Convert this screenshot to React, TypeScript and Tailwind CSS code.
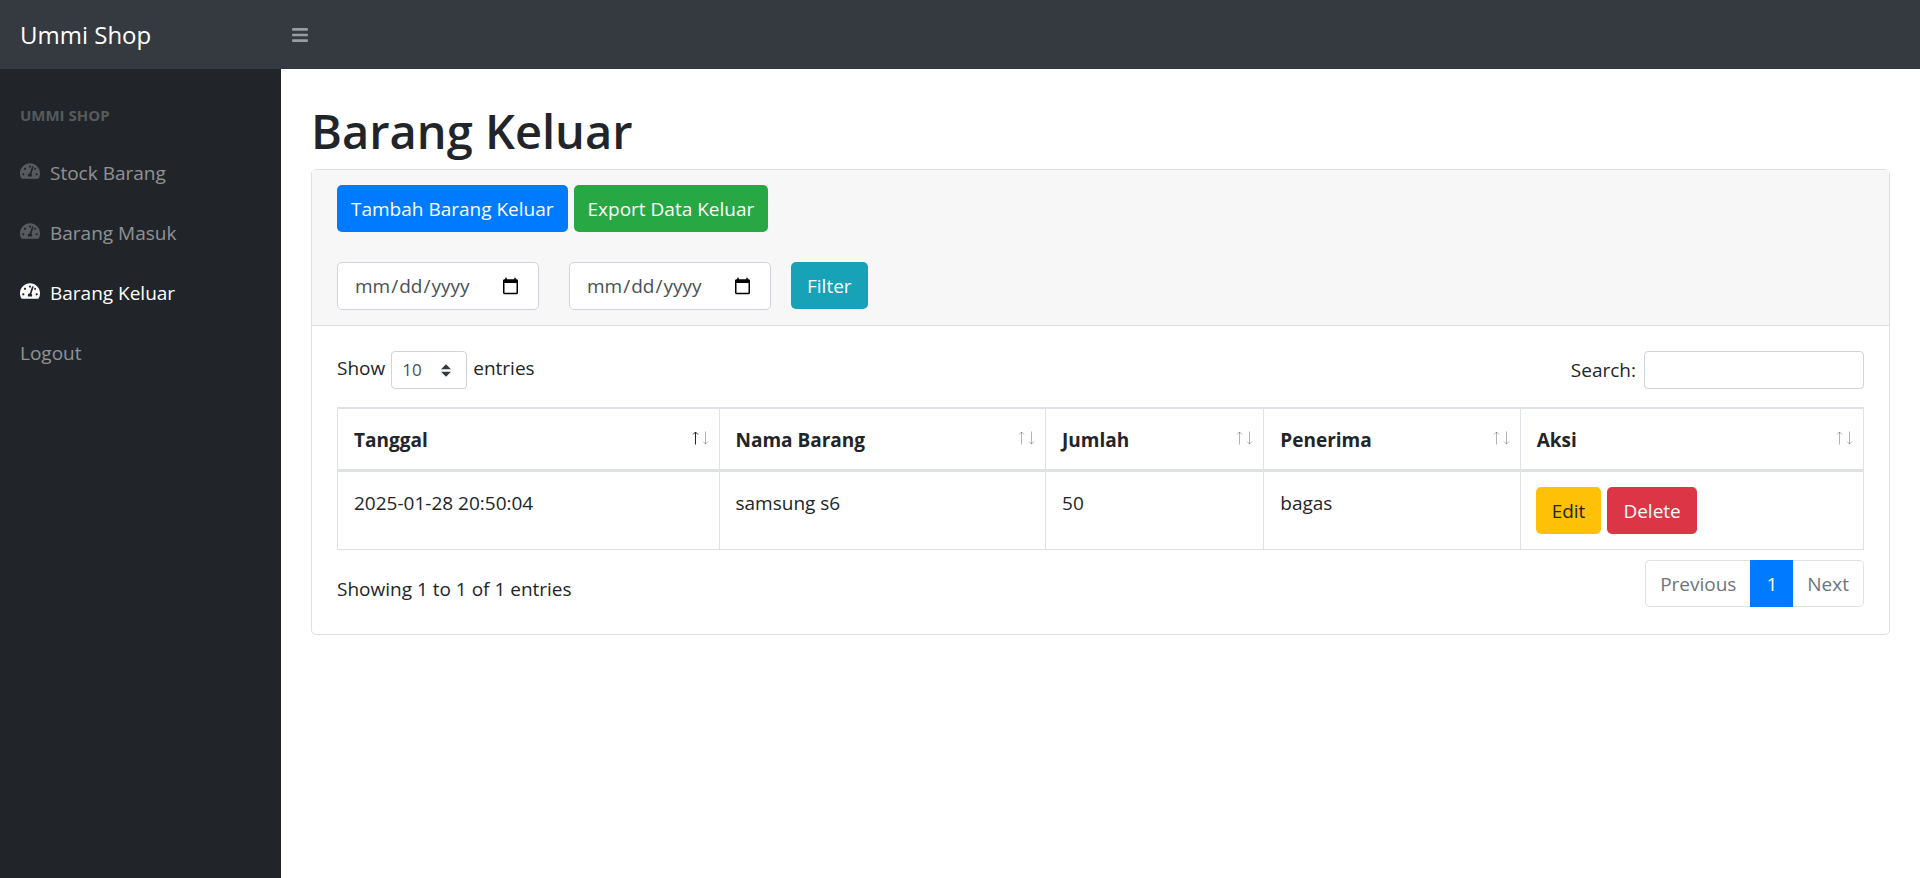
import type { ReactNode } from "react";
import { FaBars, FaTachometerAlt } from "react-icons/fa";

const navItems = [
  { label: "Stock Barang", icon: true, active: false },
  { label: "Barang Masuk", icon: true, active: false },
  { label: "Barang Keluar", icon: true, active: true },
  { label: "Logout", icon: false, active: false },
];

const columns = [
  { label: "Tanggal", width: "w-[25%]", sorted: true },
  { label: "Nama Barang", width: "w-[21.4%]", sorted: false },
  { label: "Jumlah", width: "w-[14.3%]", sorted: false },
  { label: "Penerima", width: "w-[16.8%]", sorted: false },
  { label: "Aksi", width: "w-[22.5%]", sorted: false },
];

const rows = [
  { tanggal: "2025-01-28 20:50:04", nama: "samsung s6", jumlah: 50, penerima: "bagas" },
];

function Button({ color, children }: { color: string; children: ReactNode }) {
  return (
    <button type="button" className={`h-[47px] rounded-[5px] ${color}`}>
      {children}
    </button>
  );
}

function DateInput({ label }: { label: string }) {
  return (
    <input
      type="date"
      aria-label={label}
      className="h-12 w-[202px] rounded-[5px] border border-[#ced4da] bg-white px-4 text-[#495057]"
    />
  );
}

function SortArrows({ sorted }: { sorted: boolean }) {
  return (
    <svg width="18" height="14" viewBox="0 0 18 14" fill="none" stroke="#212529" aria-hidden="true">
      <path d="M4.500 13.500V1M2 3.500L4.500 1L7 3.500" strokeWidth="1" opacity={sorted ? 1 : 0.35} />
      <path d="M14.500 0.500V13M12 10.500L14.500 13L17 10.500" strokeWidth="1" opacity="0.35" />
    </svg>
  );
}

function Sidebar() {
  return (
    <nav className="w-[281px] shrink-0 bg-[#212529] pt-[34px]">
      <div className="px-5 pb-4 text-[15px] leading-6 font-bold text-white/25">UMMI SHOP</div>
      {navItems.map((item) => (
        <a
          key={item.label}
          href="#"
          className={`flex h-[60px] items-center px-5 ${item.active ? "text-white" : "text-white/50"}`}
        >
          {item.icon && (
            <FaTachometerAlt
              className={`mr-2.5 mb-1 h-[18px] w-5 ${item.active ? "text-white" : "text-white/25"}`}
            />
          )}
          {item.label}
        </a>
      ))}
    </nav>
  );
}

export default function App() {
  return (
    <div className="flex min-h-screen flex-col bg-white font-['Open_Sans',sans-serif] text-[19px] leading-[30px] text-[#212529]">
      <header className="flex h-[69px] items-center bg-[#343a40]">
        <a href="#" className="w-[281px] px-5 text-2xl text-white">
          Ummi Shop
        </a>
        <button type="button" aria-label="Toggle navigation" className="px-[11px] text-white/50">
          <FaBars className="h-[18px] w-4" />
        </button>
      </header>
      <div className="flex grow">
        <Sidebar />
        <main className="grow px-[30px] pt-8">
          <h1 className="mb-2 text-[47px] leading-[60px] font-semibold">Barang Keluar</h1>
          <section className="rounded-[5px] border border-[#dfdfdf]">
            <div className="border-b border-[#dfdfdf] bg-[#f7f7f7] px-[25px] py-[15px]">
              <div className="flex gap-1.5">
                <Button color="bg-[#007bff] px-3.5 text-white">Tambah Barang Keluar</Button>
                <Button color="bg-[#28a745] px-3.5 text-white">Export Data Keluar</Button>
              </div>
              <form className="mt-[30px] flex items-start">
                <DateInput label="Tanggal mulai" />
                <div className="ml-[30px] flex gap-5">
                  <DateInput label="Tanggal selesai" />
                  <Button color="bg-[#17a2b8] px-4 text-white">Filter</Button>
                </div>
              </form>
            </div>
            <div className="px-[25px] pt-[25px] pb-[27px]">
              <div className="flex items-center justify-between">
                <label className="flex items-start gap-1.5">
                  <span className="pt-0.5">Show</span>
                  <span className="relative flex">
                    <select className="h-[38px] w-[76px] appearance-none rounded border border-[#ced4da] bg-white px-2.5 text-[17px] text-[#495057]">
                      <option>10</option>
                      <option>25</option>
                      <option>50</option>
                      <option>100</option>
                    </select>
                    <svg
                      viewBox="0 0 4 5"
                      className="pointer-events-none absolute top-[13px] right-4 h-[13px] w-[10px]"
                      aria-hidden="true"
                    >
                      <path fill="#343a40" d="M2 0L0 2h4zm0 5L0 3h4z" />
                    </svg>
                  </span>
                  <span className="pt-0.5">entries</span>
                </label>
                <label className="flex items-center gap-2">
                  Search:
                  <input
                    type="search"
                    className="h-[38px] w-[220px] rounded border border-[#ced4da] px-2.5 text-[17px]"
                  />
                </label>
              </div>
              <table className="mt-[18px] w-full table-fixed border-collapse border border-[#dee2e6] text-left">
                <thead>
                  <tr>
                    {columns.map((column) => (
                      <th
                        key={column.label}
                        className={`${column.width} border border-t-2 border-b-3 border-[#dee2e6] pt-4 pr-2.5 pb-3.5 pl-4 font-bold`}
                      >
                        <div className="flex items-start justify-between">
                          {column.label}
                          <span className="pt-1.5">
                            <SortArrows sorted={column.sorted} />
                          </span>
                        </div>
                      </th>
                    ))}
                  </tr>
                </thead>
                <tbody>
                  {rows.map((row) => (
                    <tr key={row.tanggal} className="align-top">
                      <td className="border border-[#dee2e6] p-4">{row.tanggal}</td>
                      <td className="border border-[#dee2e6] p-4">{row.nama}</td>
                      <td className="border border-[#dee2e6] p-4">{row.jumlah}</td>
                      <td className="border border-[#dee2e6] p-4">{row.penerima}</td>
                      <td className="border border-[#dee2e6] p-[15px]">
                        <div className="flex gap-1.5">
                          <Button color="bg-[#ffc107] px-4 text-[#212529]">Edit</Button>
                          <Button color="bg-[#dc3545] px-4 text-white">Delete</Button>
                        </div>
                      </td>
                    </tr>
                  ))}
                </tbody>
              </table>
              <div className="mt-2.5 flex items-center justify-between">
                <p className="pt-2.5">Showing 1 to 1 of 1 entries</p>
                <div className="flex h-[47px] text-[#6c757d]">
                  <button type="button" className="rounded-l-[5px] border border-r-0 border-[#dee2e6] px-3.5">
                    Previous
                  </button>
                  <button type="button" className="bg-[#007bff] px-4 text-white">
                    1
                  </button>
                  <button type="button" className="rounded-r-[5px] border border-l-0 border-[#dee2e6] px-3.5">
                    Next
                  </button>
                </div>
              </div>
            </div>
          </section>
        </main>
      </div>
    </div>
  );
}
